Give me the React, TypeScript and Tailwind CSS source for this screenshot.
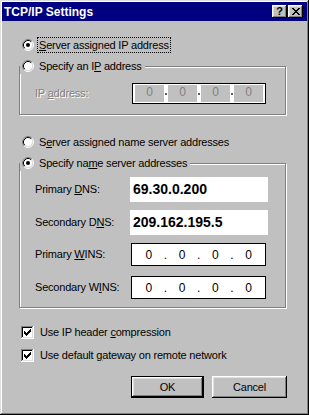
import React from "react";

const raised =
  "bg-[#c0c0c0] shadow-[inset_-1px_-1px_0_#000,inset_1px_1px_0_#fff,inset_-2px_-2px_0_#808080,inset_2px_2px_0_#dfdfdf]";

function Radio({ checked }: { checked?: boolean }) {
  return (
    <svg width="12" height="12" viewBox="0 0 12 12" className="shrink-0">
      <circle cx="6" cy="6" r="4.5" fill="#fff" />
      <path d="M2.11 9.89 A5.5 5.5 0 0 1 9.89 2.11" stroke="#808080" fill="none" />
      <path d="M9.89 2.11 A5.5 5.5 0 0 1 2.11 9.89" stroke="#fff" fill="none" />
      <path d="M2.82 9.18 A4.5 4.5 0 0 1 9.18 2.82" stroke="#000" fill="none" />
      <path d="M9.18 2.82 A4.5 4.5 0 0 1 2.82 9.18" stroke="#dfdfdf" fill="none" />
      {checked && <circle cx="6" cy="6" r="2" fill="#000" />}
    </svg>
  );
}

function Check() {
  // Win95 style check box with a pixel check mark
  const marks = [
    [3, 5], [4, 6], [5, 7], [6, 6], [7, 5], [8, 4], [9, 3],
  ];
  return (
    <svg width="13" height="13" viewBox="0 0 13 13" className="shrink-0" shapeRendering="crispEdges">
      <rect x="0" y="0" width="13" height="13" fill="#fff" />
      <rect x="0" y="0" width="12" height="1" fill="#808080" />
      <rect x="0" y="0" width="1" height="12" fill="#808080" />
      <rect x="1" y="1" width="10" height="1" fill="#000" />
      <rect x="1" y="1" width="1" height="10" fill="#000" />
      <rect x="1" y="11" width="11" height="1" fill="#dfdfdf" />
      <rect x="11" y="1" width="1" height="11" fill="#dfdfdf" />
      {marks.map(([x, y]) => (
        <rect key={x} x={x} y={y} width="1" height="3" fill="#000" />
      ))}
    </svg>
  );
}

function RadioRow({ checked, children }: { checked?: boolean; children: React.ReactNode }) {
  return (
    <div className="flex items-center h-[16px]">
      <Radio checked={checked} />
      <span className="ml-[4px] px-[1px] leading-none">{children}</span>
    </div>
  );
}

function Group({ legend, children }: { legend: React.ReactNode; children: React.ReactNode }) {
  return (
    <fieldset className="ml-[17px] w-[267px] border border-[#808080] shadow-[inset_1px_1px_0_#fff,1px_1px_0_#fff]">
      <legend className="pl-[2px] pr-[2px] bg-[#c0c0c0]">{legend}</legend>
      {children}
    </fieldset>
  );
}

function Label({ children }: { children: React.ReactNode }) {
  return <span className="w-[95px] shrink-0">{children}</span>;
}

function Octets() {
  return (
    <div className="w-[135px] h-[23px] ml-[1px] border border-black bg-white flex items-center px-[2px] text-[12px]">
      {[0, 1, 2, 3].map((i) => (
        <React.Fragment key={i}>
          {i > 0 && <span className="w-[4px] text-center">.</span>}
          <span className="flex-1 text-center">0</span>
        </React.Fragment>
      ))}
    </div>
  );
}

export default function App() {
  return (
    <div className="w-[309px] h-[415px] bg-[#c0c0c0] p-[2px] flex flex-col text-[11px] tracking-[-0.2px] text-black font-['Liberation_Sans',Arial,sans-serif] shadow-[inset_-1px_-1px_0_#000,inset_1px_1px_0_#dfdfdf,inset_-2px_-2px_0_#808080,inset_2px_2px_0_#fff]">
      {/* title bar */}
      <div className="h-[19px] bg-[#000080] flex items-center justify-between pl-[2px] pr-[4px]">
        <span className="text-white font-bold text-[12px] tracking-normal">TCP/IP Settings</span>
        <div className="flex gap-[1px]">
          <div className={`w-[15px] h-[13px] flex items-center justify-center font-bold text-[11px] leading-none ${raised}`}>?</div>
          <div className={`w-[15px] h-[13px] flex items-center justify-center ${raised}`}>
            <svg width="8" height="7" viewBox="0 0 8 7" shapeRendering="crispEdges">
              <path d="M0 0h2v1h-2zM6 0h2v1h-2zM1 1h2v1h-2zM5 1h2v1h-2zM2 2h4v1h-4zM3 3h2v1h-2zM2 4h4v1h-4zM1 5h2v1h-2zM5 5h2v1h-2zM0 6h2v1h-2zM6 6h2v1h-2z" fill="#000" />
            </svg>
          </div>
        </div>
      </div>

      <div className="mt-[16px] ml-[20px] flex items-center h-[16px]">
        <Radio checked />
        <span className="ml-[3px] px-[1px] h-[16px] flex items-center border border-dotted border-black">
          <u>S</u>erver assigned IP address
        </span>
      </div>

      <div className="mt-[5px]">
        <Group legend={<RadioRow>Specify an I<u>P</u> address</RadioRow>}>
          <div className="mt-[9px] mb-[10px] pl-[15px] flex items-center">
            <span className="w-[97px] shrink-0 text-[#808080] [text-shadow:1px_1px_0_#fff]">
              IP <u>a</u>ddress:
            </span>
            <div className="w-[134px] h-[21px] border border-black bg-white flex items-stretch px-[2px] py-[1px] gap-[4px] text-[12px] text-[#808080]">
              {[0, 1, 2, 3].map((i) => (
                <span key={i} className="flex-1 bg-[#c0c0c0] text-center leading-[14px] relative">
                  0
                  {i < 3 && <span className="absolute right-[-3px] top-[8px] w-[2px] h-[2px] bg-[#606060]" />}
                </span>
              ))}
            </div>
          </div>
        </Group>
      </div>

      <div className="mt-[19px] ml-[20px]">
        <RadioRow>
          S<u>e</u>rver assigned name server addresses
        </RadioRow>
      </div>

      <div className="mt-[5px]">
        <Group
          legend={
            <RadioRow checked>
              Specify na<u>m</u>e server addresses
            </RadioRow>
          }
        >
          <div className="mt-[6px] pl-[15px] flex items-center">
            <Label>
              Primary <u>D</u>NS:
            </Label>
            <div className="w-[138px] h-[25px] bg-white flex items-center pl-[3px] font-bold text-[14px] tracking-normal">69.30.0.200</div>
          </div>
          <div className="mt-[8px] pl-[15px] flex items-center">
            <Label>
              Secondary D<u>N</u>S:
            </Label>
            <div className="w-[138px] h-[25px] bg-white flex items-center pl-[3px] font-bold text-[14px] tracking-normal">209.162.195.5</div>
          </div>
          <div className="mt-[8px] pl-[15px] flex items-center">
            <Label>
              Primary <u>W</u>INS:
            </Label>
            <Octets />
          </div>
          <div className="mt-[10px] mb-[8px] pl-[15px] flex items-center">
            <Label>
              Secondary W<u>I</u>NS:
            </Label>
            <Octets />
          </div>
        </Group>
      </div>

      <div className="mt-[16px] ml-[19px] h-[16px] flex items-center">
        <Check />
        <span className="ml-[6px]">
          Use IP header <u>c</u>ompression
        </span>
      </div>
      <div className="mt-[7px] ml-[19px] h-[16px] flex items-center">
        <Check />
        <span className="ml-[6px]">
          Use default <u>g</u>ateway on remote network
        </span>
      </div>

      <div className="mt-[13px] mr-[20px] flex justify-end gap-[8px]">
        <button className={`w-[73px] h-[22px] border border-black ${raised}`}>OK</button>
        <button className={`w-[75px] h-[22px] ${raised}`}>Cancel</button>
      </div>
    </div>
  );
}
